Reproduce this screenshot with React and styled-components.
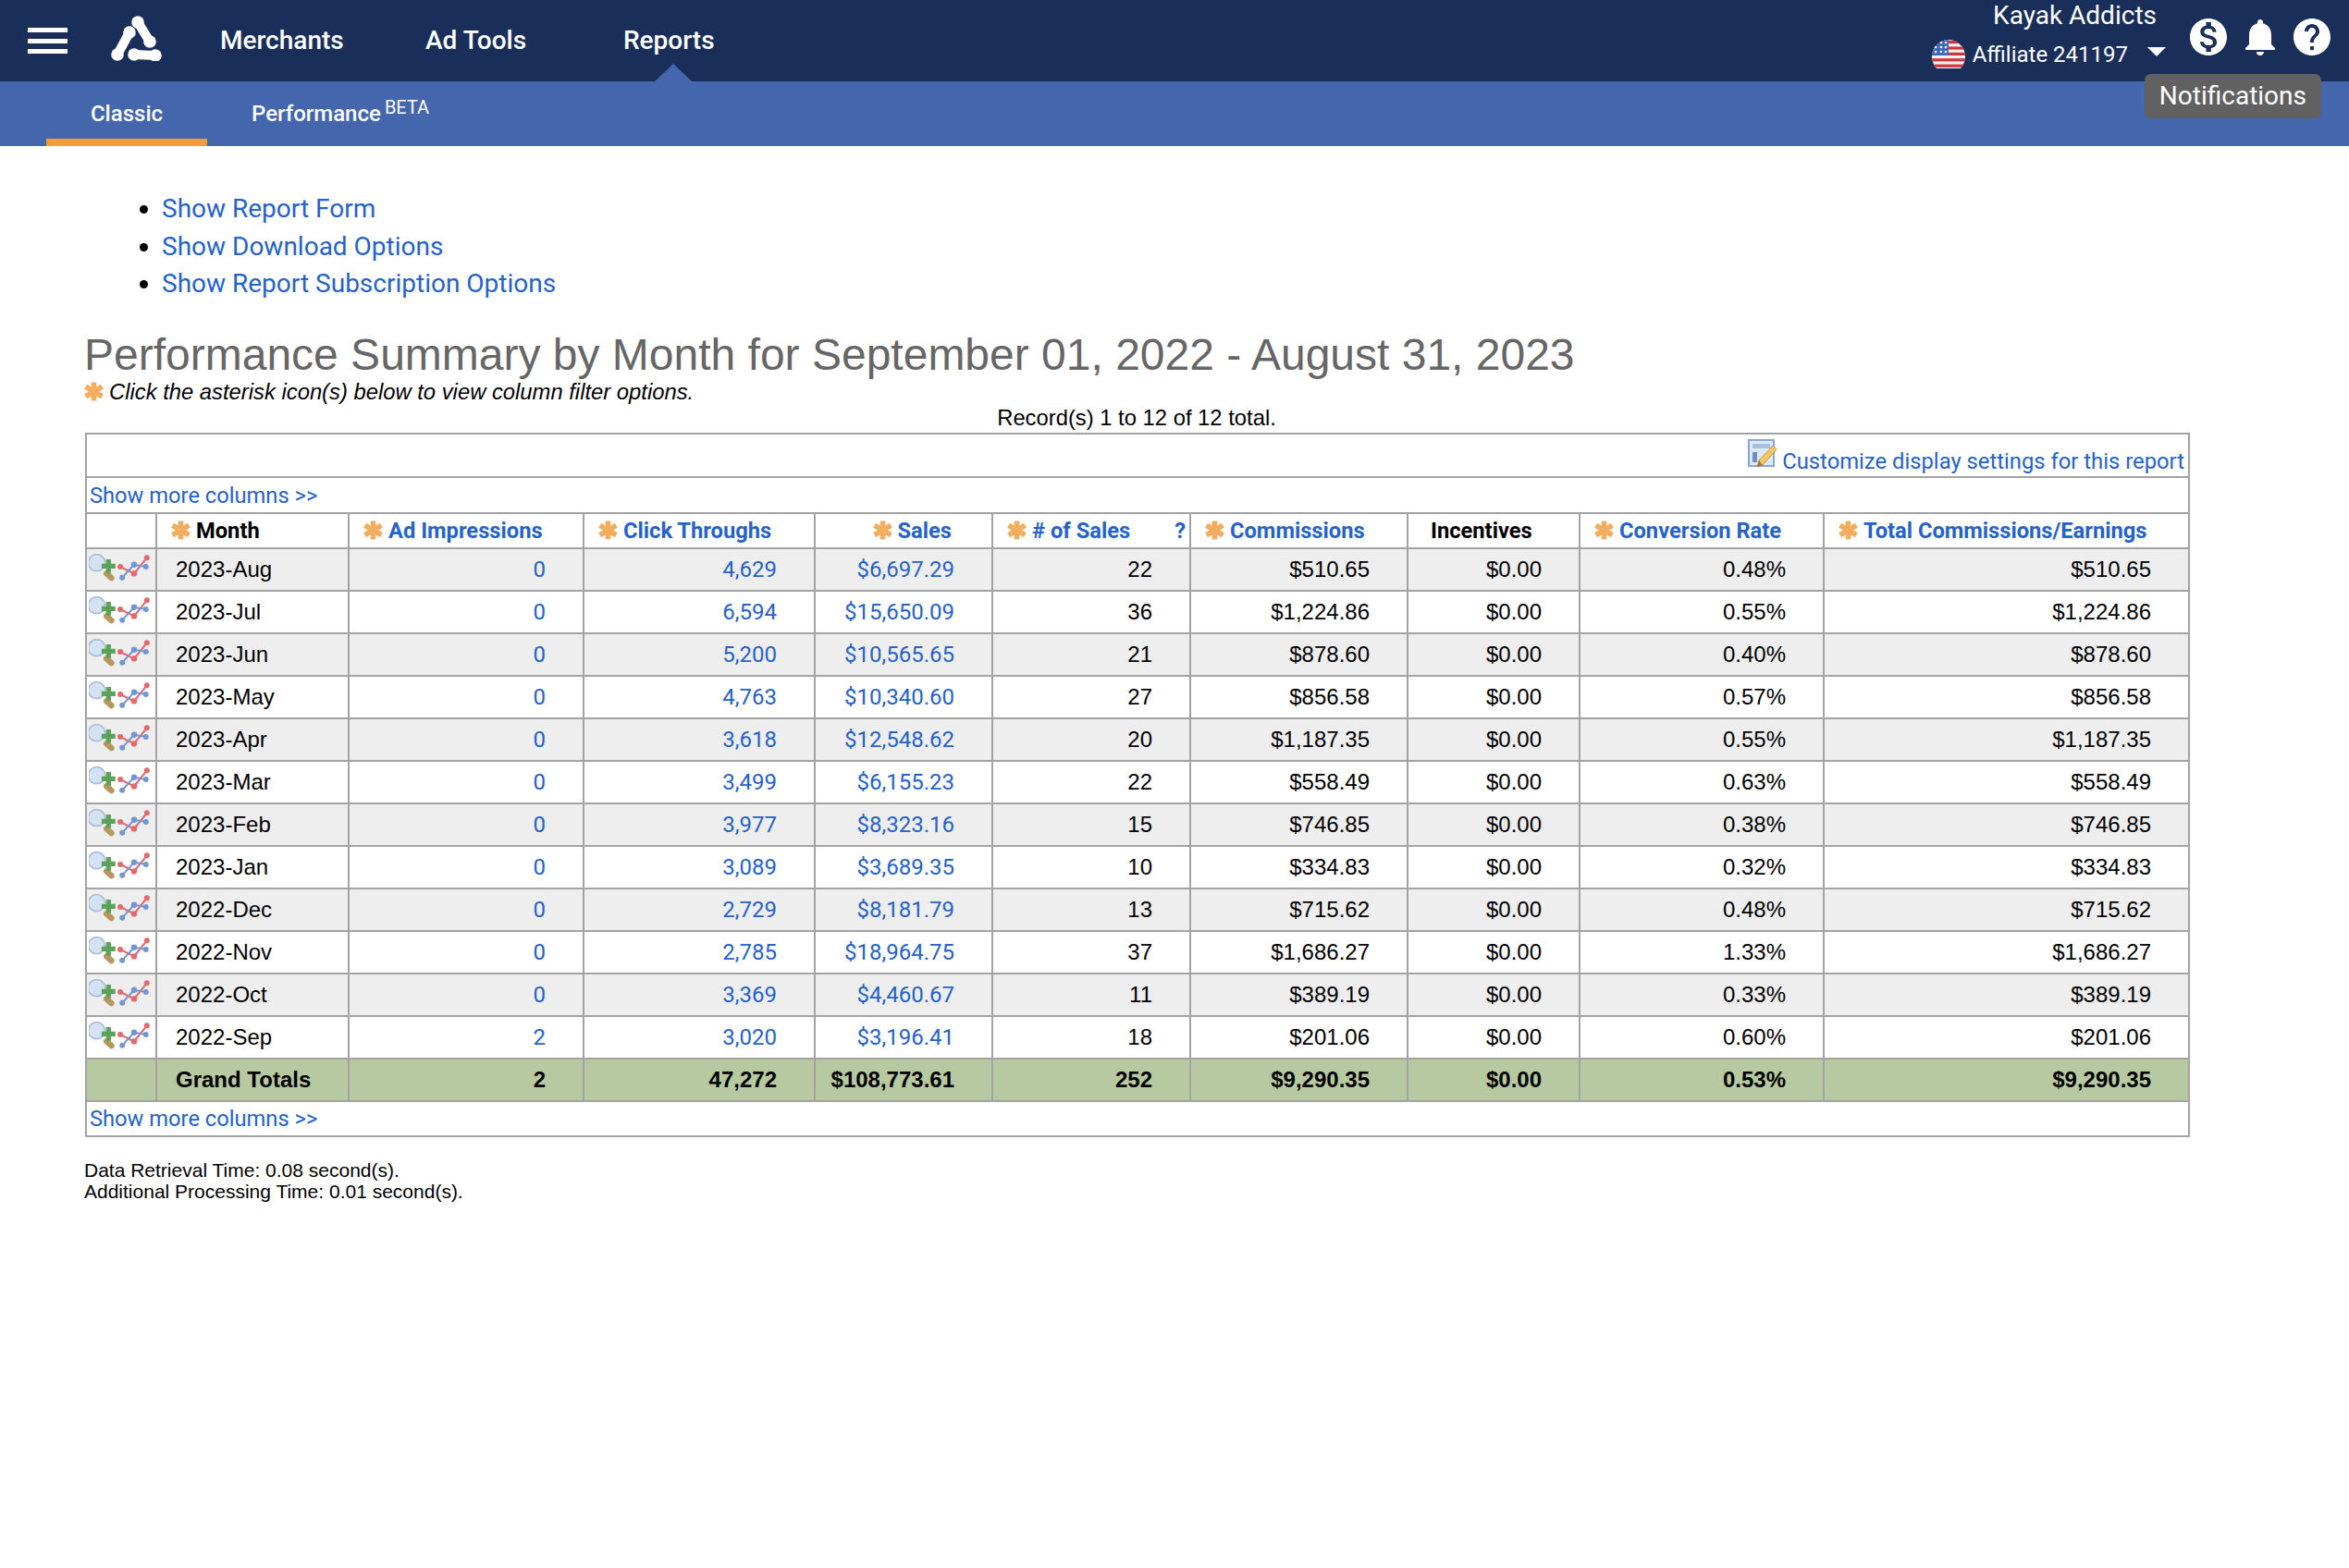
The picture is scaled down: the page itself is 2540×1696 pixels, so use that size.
import React from "react";
import styled, { createGlobalStyle } from "styled-components";
import { MdMonetizationOn, MdNotifications, MdHelp } from "react-icons/md";

const GlobalStyle = createGlobalStyle`
  html, body {
    margin: 0;
    padding: 0;
    background: #fff;
    color: #000;
    font-family: "Liberation Sans", Arial, sans-serif;
  }
`;

const BLUE = "#2562c9";
const LINE = "#a3a3a3";

const TopBar = styled.div`
  height: 88px;
  background: #1a2e5a;
  display: flex;
  align-items: center;
  padding: 0 16px 0 30px;
  color: #fff;
  font-family: Roboto, sans-serif;
`;

const Burger = styled.div`
  width: 43px;
  height: 28px;
  display: flex;
  flex-direction: column;
  justify-content: space-between;
  margin-right: 45px;
  span {
    display: block;
    height: 5px;
    background: #fff;
  }
`;

const LogoWrap = styled.svg`
  width: 60px;
  height: 52px;
  margin-right: 60px;
  margin-top: -9px;
  flex: none;
`;

const Nav = styled.nav`
  display: flex;
  flex: 1;
`;

const NavItem = styled.a`
  position: relative;
  width: ${(p) => p.$w}px;
  font-size: 28px;
  font-weight: 500;
  line-height: 88px;
`;

const Pointer = styled.span`
  position: absolute;
  left: 34px;
  bottom: 0;
  border-left: 20px solid transparent;
  border-right: 20px solid transparent;
  border-bottom: 19px solid #4466ac;
`;

const Account = styled.div`
  display: flex;
  flex-direction: column;
  align-items: flex-end;
  margin-right: 22px;
`;

const AccountName = styled.div`
  font-size: 28px;
  line-height: 34px;
  margin-right: 10px;
  margin-top: -12px;
`;

const AccountRow = styled.div`
  display: flex;
  align-items: center;
  font-size: 24px;
  font-weight: 400;
  line-height: 34px;
  margin-top: 8px;
`;

const Flag = styled.svg`
  width: 36px;
  height: 32px;
  margin-right: 8px;
`;

const Caret = styled.span`
  margin-left: 21px;
  margin-bottom: 6px;
  border-left: 10px solid transparent;
  border-right: 10px solid transparent;
  border-top: 10px solid #fff;
`;

const IconRow = styled.div`
  position: relative;
  display: flex;
  align-items: center;
  gap: 8px;
  margin-top: -8px;
  svg {
    display: block;
    width: 48px;
    height: 48px;
    fill: #fff;
  }
`;

const Tip = styled.div`
  position: absolute;
  top: 64px;
  right: 14px;
  padding: 0 16px;
  height: 48px;
  line-height: 47px;
  border-radius: 7px;
  background: #616161;
  color: #fff;
  font-size: 28px;
  white-space: nowrap;
`;

const SubBar = styled.div`
  height: 70px;
  background: #4466ac;
  display: flex;
  padding-left: 50px;
  color: #fff;
  font-family: Roboto, sans-serif;
  font-size: 24px;
  font-weight: 500;
`;

const SubTab = styled.a`
  position: relative;
  display: block;
  width: ${(p) => p.$w}px;
  text-align: ${(p) => (p.$on ? "center" : "left")};
  line-height: 70px;
  ${(p) => p.$on && "border-bottom: 8px solid #f39c35; height: 62px; margin-right: 48px;"}
  sup {
    font-size: 20px;
    font-weight: 400;
    line-height: 0;
    margin-left: 4px;
    position: relative;
    top: 1px;
  }
`;

const Main = styled.main`
  padding: 48px 173px 0 91px;
`;

const Links = styled.ul`
  margin: 0;
  padding: 0 0 0 84px;
  font-family: Roboto, sans-serif;
  font-size: 28px;
  line-height: 40.5px;
  li::marker {
    color: #000;
  }
`;

const A = styled.a`
  color: ${BLUE};
  text-decoration: none;
`;

const Title = styled.h1`
  margin: 30px 0 0;
  font-size: 48px;
  line-height: 51px;
  font-weight: 400;
  color: #666;
  white-space: nowrap;
`;

const Hint = styled.div`
  display: flex;
  align-items: center;
  font-size: 23.8px;
  font-style: italic;
  line-height: 28px;
  margin-top: 1px;
  svg {
    margin-right: 6px;
  }
`;

const Records = styled.div`
  text-align: center;
  font-size: 23.8px;
  line-height: 28px;
  margin-bottom: 2px;
`;

const Table = styled.table`
  width: 2274px;
  margin-left: 1px;
  table-layout: fixed;
  border-collapse: collapse;
  border: 2px solid ${LINE};
  font-size: 24px;
  td, th {
    border: 2px solid ${LINE};
    padding: 0;
    overflow: hidden;
    white-space: nowrap;
  }
`;

const ToolRow = styled.tr`
  height: 47px;
  font-family: Roboto, sans-serif;
  font-size: 23.8px;
  td {
    text-align: right;
    padding: 4px 4px 0 0;
  }
  svg {
    vertical-align: 0;
    margin-right: 5px;
  }
`;

const MoreRow = styled.tr`
  height: ${(p) => p.$h}px;
  font-family: Roboto, sans-serif;
  font-size: 23.7px;
  td {
    padding: ${(p) => p.$top || 0}px 0 0 3px;
  }
`;

const HeadRow = styled.tr`
  height: 38px;
  font-family: Roboto, sans-serif;
  font-size: 23.7px;
`;

const Head = styled.th`
  font-weight: 700;
  text-align: ${(p) => (p.$right ? "right" : "left")};
  padding: 0 ${(p) => p.$pr || 0}px 0 ${(p) => p.$pl || 15}px !important;
  color: ${(p) => (p.$plain ? "#000" : BLUE)};
  svg {
    vertical-align: -2px;
    margin-right: 6px;
  }
`;

const Help = styled.span`
  float: right;
  margin-right: 4px;
`;

const Row = styled.tr`
  height: 46px;
  background: ${(p) => (p.$total ? "#b7c9a1" : p.$odd ? "#eeeeee" : "#fff")};
  font-weight: ${(p) => (p.$total ? 700 : 400)};
`;

const ToolCell = styled.td`
  vertical-align: top;
  padding: 5px 0 0 2px !important;
  svg {
    display: block;
  }
`;

const MonthCell = styled.td`
  padding-left: 20px !important;
`;

const Num = styled.td`
  text-align: right;
  padding-right: 40px !important;
  color: ${(p) => (p.$link ? BLUE : "inherit")};
  font-family: ${(p) => (p.$link ? "Roboto, sans-serif" : "inherit")};
`;

const Timing = styled.div`
  margin-top: 24px;
  font-size: 21px;
  line-height: 23px;
`;

const Col = styled.col`
  width: ${(p) => p.$w}px;
`;

function Logo() {
  const bones = [
    [49, 22, 62, 43],
    [40, 33, 27, 57],
    [45, 57, 68, 58],
  ];
  return (
    <LogoWrap viewBox="18 12 60 52">
      {bones.map(([x1, y1, x2, y2]) => (
        <g key={x1} fill="#fff">
          <line x1={x1} y1={y1} x2={x2} y2={y2} stroke="#fff" strokeWidth="10" />
          <circle cx={x1} cy={y1} r="6.8" />
          <circle cx={x2} cy={y2} r="6.8" />
        </g>
      ))}
    </LogoWrap>
  );
}

function UsFlag() {
  const stripes = [0, 1, 2, 3, 4];
  return (
    <Flag viewBox="0 0 36 32">
      <defs>
        <clipPath id="flagClip">
          <path d="M18 0a18 18 0 0 1 17 24q-1 4-4 7H5q-3-3-4-7A18 18 0 0 1 18 0z" />
        </clipPath>
      </defs>
      <g clipPath="url(#flagClip)">
        <rect width="36" height="32" fill="#f2f2f2" />
        {stripes.map((i) => (
          <rect key={i} y={1 + i * 6.4} width="36" height="3.2" fill="#d0343c" />
        ))}
        <rect width="18" height="17" fill="#3b67bd" />
        {[4, 10, 15].map((x) =>
          [3, 8, 13].map((y) => <circle key={x + "-" + y} cx={x} cy={y} r="1.3" fill="#fff" />)
        )}
      </g>
    </Flag>
  );
}

function Star({ size = 21 }) {
  return (
    <svg width={size} height={size} viewBox="0 0 20 20" style={{ filter: "blur(0.7px)" }}>
      <g stroke="#f2ad5e" strokeWidth="5.4">
        <line x1="10" y1="0.5" x2="10" y2="19.5" />
        <line x1="1.5" y1="5" x2="18.5" y2="15" />
        <line x1="18.5" y1="5" x2="1.5" y2="15" />
      </g>
    </svg>
  );
}

function RowIcons() {
  return (
    <svg width="66" height="30" viewBox="7 3 62 28" style={{ filter: "blur(0.5px)" }}>
      <circle cx="15" cy="12" r="8.5" fill="#d5e2f4" stroke="#a9bfdc" strokeWidth="1.6" />
      <path d="M25 23l5 4.500" stroke="#b8975f" strokeWidth="6" strokeLinecap="round" />
      <path d="M24.500 8.500h5v4.500H34v5h-4.500v4.500h-5V18H20v-5h4.500z" fill="#5ca359" />
      <polyline points="39,16 53,23 66,7" fill="none" stroke="#e4686e" strokeWidth="2" />
      <polyline points="41,27 53,14 65,16" fill="none" stroke="#7295d3" strokeWidth="2" />
      <circle cx="39" cy="16" r="2.8" fill="#e4686e" />
      <circle cx="53" cy="23" r="3" fill="#e4686e" />
      <circle cx="66" cy="7" r="2.8" fill="#e4686e" />
      <circle cx="41" cy="27" r="2.8" fill="#7295d3" />
      <circle cx="53" cy="14" r="3" fill="#7295d3" />
      <circle cx="65" cy="16" r="2.8" fill="#7295d3" />
    </svg>
  );
}

function CustomizeIcon() {
  return (
    <svg width="32" height="32" viewBox="0 0 32 32" style={{ filter: "blur(0.4px)" }}>
      <rect x="1" y="1" width="27" height="28" fill="#dfe8f6" stroke="#8ba6d2" strokeWidth="2" />
      <rect x="5" y="5" width="19" height="5" fill="#a9bfe0" />
      <rect x="5" y="14" width="5" height="11" fill="#6e8fc8" />
      <path d="M27 7l4 4-15 17-6 2 2-7z" fill="#eec965" stroke="#c9913f" strokeWidth="1" />
      <path d="M10 30l2-7 4 5z" fill="#a8743c" />
    </svg>
  );
}

const rows = [
  ["2023-Aug", "0", "4,629", "$6,697.29", "22", "$510.65", "0.48%"],
  ["2023-Jul", "0", "6,594", "$15,650.09", "36", "$1,224.86", "0.55%"],
  ["2023-Jun", "0", "5,200", "$10,565.65", "21", "$878.60", "0.40%"],
  ["2023-May", "0", "4,763", "$10,340.60", "27", "$856.58", "0.57%"],
  ["2023-Apr", "0", "3,618", "$12,548.62", "20", "$1,187.35", "0.55%"],
  ["2023-Mar", "0", "3,499", "$6,155.23", "22", "$558.49", "0.63%"],
  ["2023-Feb", "0", "3,977", "$8,323.16", "15", "$746.85", "0.38%"],
  ["2023-Jan", "0", "3,089", "$3,689.35", "10", "$334.83", "0.32%"],
  ["2022-Dec", "0", "2,729", "$8,181.79", "13", "$715.62", "0.48%"],
  ["2022-Nov", "0", "2,785", "$18,964.75", "37", "$1,686.27", "1.33%"],
  ["2022-Oct", "0", "3,369", "$4,460.67", "11", "$389.19", "0.33%"],
  ["2022-Sep", "2", "3,020", "$3,196.41", "18", "$201.06", "0.60%"],
];

const colWidths = [76, 208, 254, 250, 192, 214, 235, 186, 264, 395];

export default function App() {
  return (
    <>
      <GlobalStyle />
      <TopBar>
        <Burger>
          <span />
          <span />
          <span />
        </Burger>
        <Logo />
        <Nav>
          <NavItem $w={222}>Merchants</NavItem>
          <NavItem $w={214}>Ad Tools</NavItem>
          <NavItem $w={110}>
            Reports
            <Pointer />
          </NavItem>
        </Nav>
        <Account>
          <AccountName>Kayak Addicts</AccountName>
          <AccountRow>
            <UsFlag />
            Affiliate 241197
            <Caret />
          </AccountRow>
        </Account>
        <IconRow>
          <MdMonetizationOn />
          <MdNotifications />
          <MdHelp />
          <Tip>Notifications</Tip>
        </IconRow>
      </TopBar>
      <SubBar>
        <SubTab $on $w={174}>Classic</SubTab>
        <SubTab $w={260}>
          Performance<sup>BETA</sup>
        </SubTab>
      </SubBar>
      <Main>
        <Links>
          <li><A>Show Report Form</A></li>
          <li><A>Show Download Options</A></li>
          <li><A>Show Report Subscription Options</A></li>
        </Links>
        <Title>Performance Summary by Month for September 01, 2022 - August 31, 2023</Title>
        <Hint>
          <Star />
          Click the asterisk icon(s) below to view column filter options.
        </Hint>
        <Records>Record(s) 1 to 12 of 12 total.</Records>
        <Table>
          <colgroup>
            {colWidths.map((w, i) => (
              <Col key={i} $w={w} />
            ))}
          </colgroup>
          <tbody>
            <ToolRow>
              <td colSpan={10}>
                <CustomizeIcon />
                <A>Customize display settings for this report</A>
              </td>
            </ToolRow>
            <MoreRow $h={39} $top={2}>
              <td colSpan={10}><A>Show more columns &gt;&gt;</A></td>
            </MoreRow>
            <HeadRow>
              <Head />
              <Head $plain><Star />Month</Head>
              <Head><Star />Ad Impressions</Head>
              <Head><Star />Click Throughs</Head>
              <Head $right $pr={43}><Star />Sales</Head>
              <Head><Star /># of Sales<Help>?</Help></Head>
              <Head><Star />Commissions</Head>
              <Head $plain $pl={24}>Incentives</Head>
              <Head><Star />Conversion Rate</Head>
              <Head><Star />Total Commissions/Earnings</Head>
            </HeadRow>
            {rows.map((r, i) => (
              <Row key={r[0]} $odd={i % 2 === 0}>
                <ToolCell><RowIcons /></ToolCell>
                <MonthCell>{r[0]}</MonthCell>
                <Num $link>{r[1]}</Num>
                <Num $link>{r[2]}</Num>
                <Num $link>{r[3]}</Num>
                <Num>{r[4]}</Num>
                <Num>{r[5]}</Num>
                <Num>$0.00</Num>
                <Num>{r[6]}</Num>
                <Num>{r[5]}</Num>
              </Row>
            ))}
            <Row $total>
              <td />
              <MonthCell>Grand Totals</MonthCell>
              <Num>2</Num>
              <Num>47,272</Num>
              <Num>$108,773.61</Num>
              <Num>252</Num>
              <Num>$9,290.35</Num>
              <Num>$0.00</Num>
              <Num>0.53%</Num>
              <Num>$9,290.35</Num>
            </Row>
            <MoreRow $h={38}>
              <td colSpan={10}><A>Show more columns &gt;&gt;</A></td>
            </MoreRow>
          </tbody>
        </Table>
        <Timing>
          Data Retrieval Time: 0.08 second(s).
          <br />
          Additional Processing Time: 0.01 second(s).
        </Timing>
      </Main>
    </>
  );
}
